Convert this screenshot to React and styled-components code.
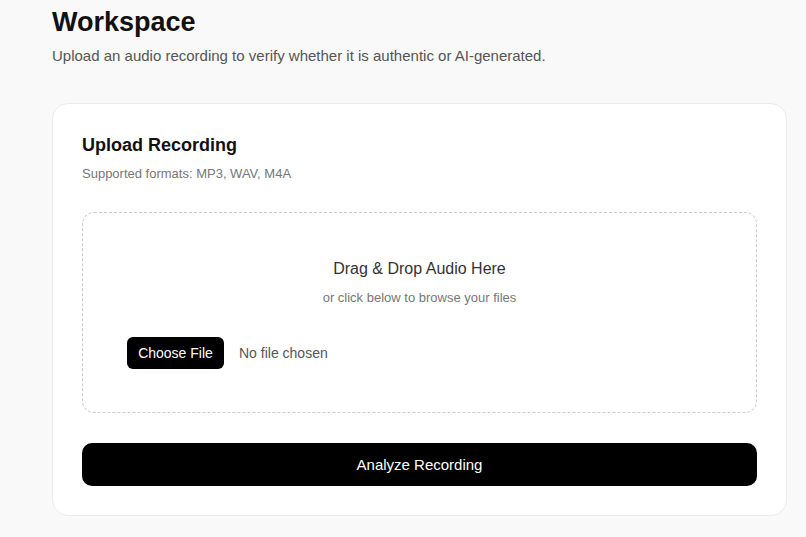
import styled, { createGlobalStyle } from "styled-components";

const GlobalStyle = createGlobalStyle`
    body {
        margin: 0;
        background: #f9f9f9;
        font-family: "Liberation Sans", Arial, sans-serif;
    }
`

const App = () => {
    return (
        <>
            <GlobalStyle />
            <Page>
                <Title>Workspace</Title>
                <Subtitle>Upload an audio recording to verify whether it is authentic or AI-generated.</Subtitle>

                <Card>
                    <CardTitle>Upload Recording</CardTitle>
                    <CardHint>Supported formats: MP3, WAV, M4A</CardHint>

                    <DropZone>
                        <DropTitle>Drag &amp; Drop Audio Here</DropTitle>
                        <DropHint>or click below to browse your files</DropHint>
                        <FileRow>
                            <ChooseButton htmlFor="audio-file">Choose File</ChooseButton>
                            <HiddenInput id="audio-file" type="file" accept=".mp3,.wav,.m4a" />
                            <FileName>No file chosen</FileName>
                        </FileRow>
                    </DropZone>

                    <AnalyzeButton type="button">Analyze Recording</AnalyzeButton>
                </Card>
            </Page>
        </>
    )
}

export default App;

const Page = styled.div`
    padding: 6px 19px 20px 52px;
`

const Title = styled.h1`
    margin: 0;
    font-size: 27px;
    line-height: 32px;
    font-weight: 700;
    color: #111;
`

const Subtitle = styled.p`
    margin: 8px 0 0;
    font-size: 15px;
    line-height: 20px;
    color: #555;
`

const Card = styled.div`
    margin-top: 37px;
    background: #fff;
    border: 1px solid #ebebeb;
    border-radius: 16px;
    padding: 29px 29px 29px;
`

const CardTitle = styled.h2`
    margin: 0;
    font-size: 18px;
    line-height: 24px;
    font-weight: 700;
    color: #111;
`

const CardHint = styled.p`
    margin: 9px 0 0;
    font-size: 13px;
    line-height: 16px;
    color: #777;
`

const DropZone = styled.div`
    margin-top: 30px;
    border: 1.5px dashed #ccc;
    border-radius: 12px;
    padding: 46px 44px 43px;
    display: flex;
    flex-direction: column;
    align-items: center;
`

const DropTitle = styled.div`
    font-size: 16px;
    line-height: 20px;
    color: #333;
`

const DropHint = styled.div`
    margin-top: 11px;
    font-size: 13px;
    line-height: 16px;
    color: #777;
`

const FileRow = styled.div`
    align-self: stretch;
    margin-top: 31px;
    display: flex;
    align-items: center;
    gap: 15px;
`

const ChooseButton = styled.label`
    display: inline-flex;
    align-items: center;
    justify-content: center;
    width: 97px;
    height: 32px;
    background: #000;
    color: #fff;
    border-radius: 6px;
    font-size: 14px;
    cursor: pointer;
`

const HiddenInput = styled.input`
    display: none;
`

const FileName = styled.span`
    font-size: 14px;
    color: #555;
`

const AnalyzeButton = styled.button`
    margin-top: 30px;
    width: 100%;
    height: 43px;
    border: none;
    border-radius: 10px;
    background: #000;
    color: #fff;
    font-family: "Liberation Sans", Arial, sans-serif;
    font-size: 15px;
    cursor: pointer;
`
